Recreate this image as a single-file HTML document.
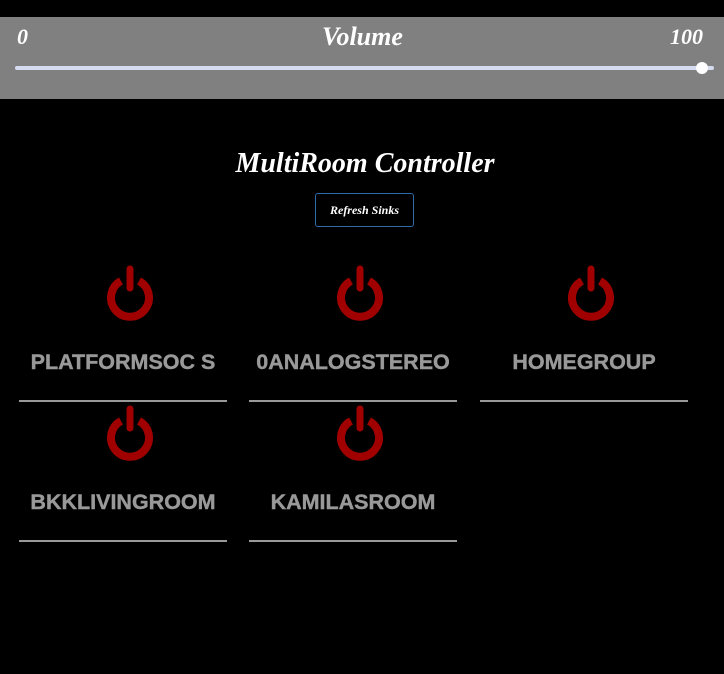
<!DOCTYPE html>
<html><head><meta charset="utf-8"><style>
body{margin:0;background:#000;width:724px;height:674px;overflow:hidden;font-family:"Liberation Sans",sans-serif;position:relative}
.bar{position:absolute;left:0;top:17px;width:724px;height:82px;background:#808080}
.s{position:absolute;color:#fff;font-family:"Liberation Serif",serif;font-style:italic;font-weight:bold}
.track{position:absolute;left:15px;top:66px;width:699px;height:4px;background:#d6dcef;border-radius:2px}
.knob{position:absolute;left:696px;top:62px;width:12px;height:12px;border-radius:50%;background:#fff}
.btn{position:absolute;left:315px;top:193px;width:99px;height:34px;border:1px solid #2e6aa6;border-radius:3px;color:#fff;font-family:"Liberation Serif",serif;font-style:italic;font-weight:bold;font-size:12px;text-align:center;line-height:32px;box-sizing:border-box}
.cell{position:absolute;width:208px;height:140px}
.cell svg{position:absolute;left:85px;top:-2px}
.cell .t{position:absolute;left:-20px;width:248px;top:84px;text-align:center;color:#999;font-weight:bold;font-size:21.5px;-webkit-text-stroke:0.4px #999}
.cell .l{position:absolute;left:0;top:134px;width:208px;height:2px;background:#999}
</style></head><body>
<div class="bar"></div>
<div class="s" style="left:17px;top:24px;font-size:22px">0</div>
<div class="s" style="left:322px;top:22px;font-size:26px">Volume</div>
<div class="s" style="left:670px;top:24px;font-size:22px">100</div>
<div class="track"></div><div class="knob"></div>
<div class="s" style="left:0;width:730px;text-align:center;top:148px;font-size:28px">MultiRoom Controller</div>
<div class="btn">Refresh Sinks</div>
<svg width="0" height="0" style="position:absolute"><defs><g id="p"><path d="M17 17 A19 19 0 1 0 35 17" fill="none" stroke="#a00000" stroke-width="8"/><line x1="26" y1="5" x2="26" y2="24" stroke="#a00000" stroke-width="7" stroke-linecap="round"/></g></defs></svg>
<div class="cell" style="left:19px;top:266px"><svg width="52" height="58"><use href="#p"/></svg><div class="t">PLATFORMSOC S</div><div class="l"></div></div>
<div class="cell" style="left:249px;top:266px"><svg width="52" height="58"><use href="#p"/></svg><div class="t">0ANALOGSTEREO</div><div class="l"></div></div>
<div class="cell" style="left:480px;top:266px"><svg width="52" height="58"><use href="#p"/></svg><div class="t">HOMEGROUP</div><div class="l"></div></div>
<div class="cell" style="left:19px;top:406px"><svg width="52" height="58"><use href="#p"/></svg><div class="t">BKKLIVINGROOM</div><div class="l"></div></div>
<div class="cell" style="left:249px;top:406px"><svg width="52" height="58"><use href="#p"/></svg><div class="t">KAMILASROOM</div><div class="l"></div></div>
</body></html>
